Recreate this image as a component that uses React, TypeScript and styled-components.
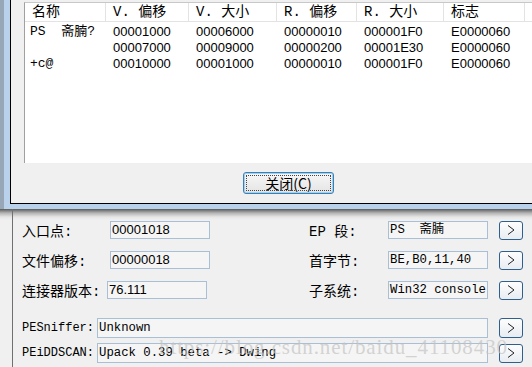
import React from 'react';
import styled, { createGlobalStyle } from 'styled-components';

const GlobalStyle = createGlobalStyle`
  body {
    margin: 0;
    font-family: "Liberation Sans", "Noto Sans CJK SC", sans-serif;
    color: #000;
  }
`;

const Page = styled.div`
  width: 532px;
  height: 367px;
  overflow: hidden;
  position: relative;
  display: flex;
  flex-direction: column;
  background: #f0f0f0;
`;

const DialogFrame = styled.div`
  height: 209px;
  flex: none;
  display: flex;
  box-sizing: border-box;
  background: #b9d1ea;
  border-left: 4px solid #98a7b7;
  padding: 0 0 5px 6px;
`;

const DialogClient = styled.div`
  flex: 1;
  display: flex;
  flex-direction: column;
  background: #f0f0f0;
  border-left: 1px solid #000;
  border-bottom: 1px solid #000;
  padding-left: 13px;
`;

const ListView = styled.div`
  margin-top: 2px;
  height: 161px;
  box-sizing: border-box;
  background: #fff;
  border-left: 1px solid #a0a0a0;
  border-top: 1px solid #c8c8c8;
`;

const columns = '81px 83px 88px 80px 87px 81px 1fr';

const HeaderRow = styled.div`
  display: grid;
  grid-template-columns: ${columns};
  height: 18px;
  border-bottom: 1px solid #e3e3e3;
`;

const HeaderCell = styled.div`
  border-right: 1px solid #e3e3e3;
  padding-left: 7px;
  font-size: 14px;
  line-height: 18px;
  white-space: pre;
  font-family: "Liberation Mono", "Noto Sans CJK SC", monospace;
`;

const Rows = styled.div`
  padding-top: 2px;
`;

const DataRow = styled.div`
  display: grid;
  grid-template-columns: ${columns};
  height: 16px;
`;

const DataCell = styled.div<{ $name?: boolean }>`
  padding-left: ${p => (p.$name ? '5px' : '7px')};
  font-size: 13px;
  line-height: 16px;
  white-space: pre;
  font-family: ${p =>
    p.$name
      ? '"Liberation Mono", "Noto Sans CJK SC", monospace'
      : '"Liberation Sans", sans-serif'};
`;

const CloseButton = styled.button`
  position: relative;
  width: 91px;
  height: 22px;
  margin: 9px 0 0 219px;
  padding: 0;
  border: 1px solid #3c7fb1;
  border-radius: 3px;
  background: linear-gradient(#f7f7f7, #e4e4e4);
  box-shadow: inset 0 0 0 1px #9fd1f3;
  font-family: "Noto Sans CJK SC", sans-serif;
  font-size: 14px;
  line-height: 18px;
  color: #000;

  &::after {
    content: '';
    position: absolute;
    inset: 2px;
    border: 1px dotted #444;
  }
`;

const MainWindow = styled.div`
  flex: 1;
  padding-left: 12px;
  background: linear-gradient(#5a5a5a 0, #b4b4b4 4px, #e6e6e6 8px, #f0f0f0 11px);
`;

const MainPanel = styled.div`
  height: 100%;
  box-sizing: border-box;
  border-left: 1px solid #707070;
  padding: 11px 0 0 9px;
  display: flex;
  flex-direction: column;
`;

const FieldRows = styled.div`
  display: flex;
  flex-direction: column;
  gap: 12px;
`;

const FieldRow = styled.div`
  display: grid;
  grid-template-columns: 287px auto;
  height: 18px;
`;

const Group = styled.div`
  display: flex;
  align-items: center;
`;

const Label = styled.div<{ $w: number; $mono?: boolean }>`
  width: ${p => p.$w}px;
  flex: none;
  font-size: ${p => (p.$mono ? '12px' : '14px')};
  white-space: pre;
  font-family: ${p =>
    p.$mono
      ? '"Liberation Mono", monospace'
      : '"Liberation Mono", "Noto Sans CJK SC", sans-serif'};
`;

const ValueBox = styled.div<{ $w: number; $h?: number; $mono?: boolean }>`
  width: ${p => p.$w}px;
  height: ${p => p.$h ?? 18}px;
  box-sizing: border-box;
  flex: none;
  border: 1px solid #a9bfd6;
  background: #f5f5f5;
  padding-left: 1px;
  font-size: ${p => (p.$mono ? '12.3px' : '13px')};
  line-height: ${p => (p.$h ?? 18) - 2}px;
  white-space: pre;
  overflow: hidden;
  font-family: ${p =>
    p.$mono
      ? '"Liberation Mono", "Noto Sans CJK SC", monospace'
      : '"Liberation Sans", sans-serif'};
`;

const MoreButton = styled.button<{ $h?: number }>`
  width: 24px;
  height: ${p => p.$h ?? 19}px;
  margin-left: 11px;
  padding: 0;
  flex: none;
  display: flex;
  align-items: center;
  justify-content: center;
  border: 1px solid #2f5f8c;
  border-radius: 3px;
  background: linear-gradient(#fdfdfd, #e8edf2);
`;

const ScannerRows = styled.div`
  margin-top: 20px;
  display: flex;
  flex-direction: column;
  gap: 5px;
`;

const ScannerRow = styled.div`
  display: flex;
  align-items: center;
  height: 20px;
`;

const Watermark = styled.div`
  position: absolute;
  left: 159px;
  top: 335px;
  font-family: "Liberation Serif", serif;
  font-size: 21px;
  letter-spacing: 0.9px;
  color: rgba(195, 195, 195, 0.7);
  white-space: nowrap;
  pointer-events: none;
`;

const Chevron = () => (
  <svg width="10" height="12" viewBox="0 0 10 12">
    <polyline points="2,1.5 8,6 2,10.5" fill="none" stroke="#222" strokeWidth="1" />
  </svg>
);

const headers = ['名称', 'V. 偏移', 'V. 大小', 'R. 偏移', 'R. 大小', '标志', ''];

const sections = [
  ['PS  斋腩?', '00001000', '00006000', '00000010', '000001F0', 'E0000060'],
  ['', '00007000', '00009000', '00000200', '00001E30', 'E0000060'],
  ['+c@', '00010000', '00001000', '00000010', '000001F0', 'E0000060'],
];

const fields = [
  { left: '入口点:', lw: 88, value: '00001018', right: 'EP 段:', rvalue: 'PS  斋腩', rmono: true },
  { left: '文件偏移:', lw: 88, value: '00000018', right: '首字节:', rvalue: 'BE,B0,11,40', rmono: true },
  { left: '连接器版本:', lw: 85, value: '76.111', right: '子系统:', rvalue: 'Win32 console', rmono: true },
];

export default function App() {
  return (
    <Page>
      <GlobalStyle />
      <DialogFrame>
        <DialogClient>
          <ListView>
            <HeaderRow>
              {headers.map((h, i) => (
                <HeaderCell key={i}>{h}</HeaderCell>
              ))}
            </HeaderRow>
            <Rows>
              {sections.map((row, i) => (
                <DataRow key={i}>
                  {row.map((c, j) => (
                    <DataCell key={j} $name={j === 0}>{c}</DataCell>
                  ))}
                </DataRow>
              ))}
            </Rows>
          </ListView>
          <div>
            <CloseButton>关闭(C)</CloseButton>
          </div>
        </DialogClient>
      </DialogFrame>
      <MainWindow>
        <MainPanel>
          <FieldRows>
            {fields.map(f => (
              <FieldRow key={f.left}>
                <Group>
                  <Label $w={f.lw}>{f.left}</Label>
                  <ValueBox $w={100}>{f.value}</ValueBox>
                </Group>
                <Group>
                  <Label $w={79}>{f.right}</Label>
                  <ValueBox $w={100} $mono={f.rmono}>{f.rvalue}</ValueBox>
                  <MoreButton><Chevron /></MoreButton>
                </Group>
              </FieldRow>
            ))}
          </FieldRows>
          <ScannerRows>
            <ScannerRow>
              <Label $w={75} $mono>PESniffer:</Label>
              <ValueBox $w={391} $h={20} $mono>Unknown</ValueBox>
              <MoreButton $h={20}><Chevron /></MoreButton>
            </ScannerRow>
            <ScannerRow>
              <Label $w={75} $mono>PEiDDSCAN:</Label>
              <ValueBox $w={391} $h={20} $mono>Upack 0.39 beta -&gt; Dwing</ValueBox>
              <MoreButton $h={19}><Chevron /></MoreButton>
            </ScannerRow>
          </ScannerRows>
        </MainPanel>
      </MainWindow>
      <Watermark>https://blog.csdn.net/baidu_41108430</Watermark>
    </Page>
  );
}
